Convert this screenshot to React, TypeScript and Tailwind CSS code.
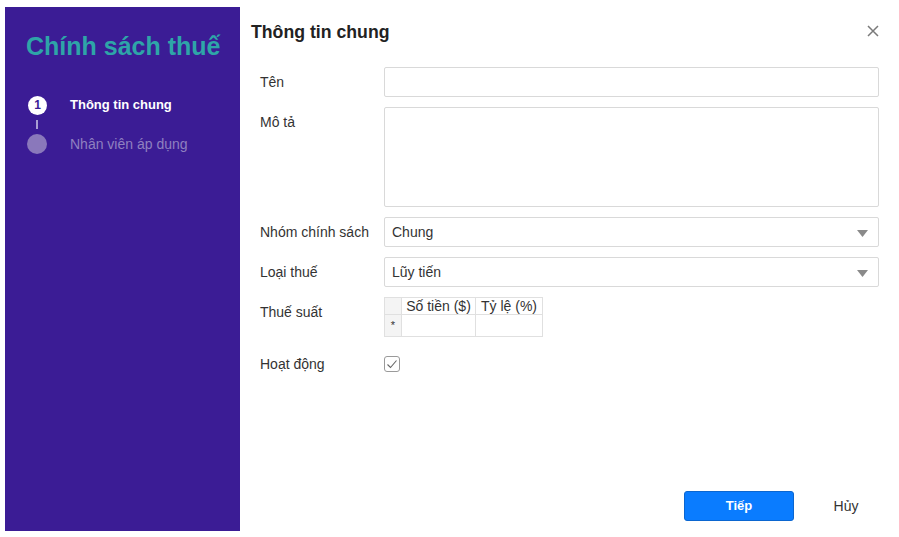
import React from "react";

const font = { fontFamily: '"Liberation Sans", Arial, sans-serif' };

function Arrow() {
  return (
    <svg width="11" height="7" viewBox="0 0 11 7" className="absolute right-[10px] top-[12px]">
      <path d="M0 0 L11 0 L5.5 7 Z" fill="#8a8a8a" />
    </svg>
  );
}

export default function App() {
  return (
    <div className="w-[899px] h-[537px] bg-white flex overflow-hidden text-[#333]" style={font}>
      {/* Sidebar */}
      <div className="ml-[5px] mt-[7px] w-[235px] h-[524px] bg-[#3b1c95] pt-[24px] pl-[21px] flex flex-col">
        <div className="text-[25px] leading-[30px] font-bold text-[#2ea5a8] whitespace-nowrap">Chính sách thuế</div>
        <div className="mt-[34px] flex flex-col">
          <div className="flex items-center h-[20px]">
            <div className="ml-[2px] w-[19px] h-[19px] rounded-full bg-white flex items-center justify-center text-[12px] font-bold text-[#3b1c95] leading-none">1</div>
            <div className="ml-[23px] text-[13px] font-bold text-white whitespace-nowrap">Thông tin chung</div>
          </div>
          <div className="ml-[10px] w-[2px] h-[9px] my-[5px] bg-[#a99ed3]" />
          <div className="flex items-center h-[20px]">
            <div className="ml-[1px] w-[20px] h-[20px] rounded-full bg-[#8a78bb]" />
            <div className="ml-[23px] text-[14px] text-[#8f80c0] whitespace-nowrap">Nhân viên áp dụng</div>
          </div>
        </div>
      </div>

      {/* Main panel */}
      <div className="flex-1 flex flex-col pl-[11px] pt-[20px] pb-[16px] relative">
        <div className="flex items-center justify-between pr-[20px]">
          <div className="text-[17.7px] leading-[24px] font-bold text-[#222]">Thông tin chung</div>
          <svg width="12" height="12" viewBox="0 0 12 12" className="mt-[-3px]">
            <path d="M1 1 L11 11 M11 1 L1 11" stroke="#7a7a7a" strokeWidth="1.5" />
          </svg>
        </div>

        <div className="mt-[23px] pl-[9px] flex flex-col gap-[10px] text-[14px]">
          <div className="flex items-start">
            <div className="w-[124px] leading-[30px]">Tên</div>
            <div className="w-[495px] h-[30px] border border-[#d9d9d9] rounded-[2px]" />
          </div>
          <div className="flex items-start">
            <div className="w-[124px] leading-[30px]">Mô tả</div>
            <div className="w-[495px] h-[100px] border border-[#d9d9d9] rounded-[2px]" />
          </div>
          <div className="flex items-start">
            <div className="w-[124px] leading-[30px]">Nhóm chính sách</div>
            <div className="relative w-[495px] h-[30px] border border-[#d9d9d9] rounded-[2px] pl-[7px] leading-[28px]">
              Chung
              <Arrow />
            </div>
          </div>
          <div className="flex items-start">
            <div className="w-[124px] leading-[30px]">Loại thuế</div>
            <div className="relative w-[495px] h-[30px] border border-[#d9d9d9] rounded-[2px] pl-[7px] leading-[28px]">
              Lũy tiến
              <Arrow />
            </div>
          </div>
          <div className="flex items-start">
            <div className="w-[124px] leading-[30px]">Thuế suất</div>
            <table className="border-collapse text-[14px]">
              <thead>
                <tr className="h-[17px]">
                  <th className="w-[17px] p-0 border border-[#e0e0e0] bg-[#f4f4f4]" />
                  <th className="w-[74px] p-0 border border-[#e0e0e0] font-normal leading-[15px] text-center whitespace-nowrap">Số tiền ($)</th>
                  <th className="w-[67px] p-0 border border-[#e0e0e0] font-normal leading-[15px] text-center whitespace-nowrap">Tỷ lệ (%)</th>
                </tr>
              </thead>
              <tbody>
                <tr className="h-[22px]">
                  <td className="p-0 border border-[#e0e0e0] bg-[#f4f4f4] text-[11px] text-center align-middle">*</td>
                  <td className="p-0 border border-[#e0e0e0]" />
                  <td className="p-0 border border-[#e0e0e0]" />
                </tr>
              </tbody>
            </table>
          </div>
          <div className="flex items-center mt-[2px]">
            <div className="w-[124px] leading-[30px]">Hoạt động</div>
            <div className="w-[16px] h-[16px] border border-[#9a9a9a] rounded-[3px] flex items-center justify-center">
              <svg width="12" height="10" viewBox="0 0 12 10">
                <path d="M1.5 5.5 L4.5 8.5 L10.5 1.5" stroke="#666" strokeWidth="1.1" fill="none" />
              </svg>
            </div>
          </div>
        </div>

        <div className="mt-auto flex items-center justify-end pr-[13px] gap-[12px]">
          <button className="w-[110px] h-[30px] bg-[#0a7cff] border border-[#0b66d0] rounded-[3px] text-white text-[13px] font-bold">Tiếp</button>
          <button className="w-[80px] h-[30px] text-[14px] text-[#333]">Hủy</button>
        </div>
      </div>
    </div>
  );
}
